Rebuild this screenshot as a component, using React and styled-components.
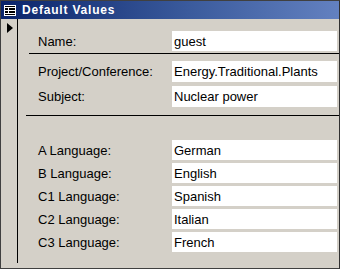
import React from "react";
import styled, { createGlobalStyle } from "styled-components";

const Global = createGlobalStyle`
  html, body {
    margin: 0;
    padding: 0;
    background: #d4d0c8;
  }
`;

const Window = styled.div`
  width: 340px;
  height: 269px;
  box-sizing: border-box;
  border: 1px solid #404040;
  border-right-color: #303030;
  display: flex;
  flex-direction: column;
  background: #d4d0c8;
  font-family: "Liberation Sans", Arial, sans-serif;
  overflow: hidden;
`;

const TitleBar = styled.div`
  height: 18px;
  flex: none;
  display: flex;
  align-items: center;
  gap: 6px;
  padding-left: 3px;
  background: linear-gradient(to right, #0a246a 0%, #3a5a9c 55%, #6381c0 100%);
  color: #fff;
  font-weight: bold;
  font-size: 12px;
  letter-spacing: 0.8px;
`;

const Body = styled.div`
  flex: 1;
  display: flex;
`;

const Selector = styled.div`
  width: 16px;
  flex: none;
  border-right: 1px solid #000;
  margin-bottom: 5px;
  padding-top: 4px;
  display: flex;
  justify-content: center;
`;

const Arrow = styled.div`
  width: 0;
  height: 0;
  margin-left: 1px;
  border-top: 5px solid transparent;
  border-bottom: 5px solid transparent;
  border-left: 6px solid #000;
`;

const Form = styled.div`
  flex: 1;
  padding-top: 12px;
  display: flex;
  flex-direction: column;
`;

const Section = styled.div`
  display: flex;
  flex-direction: column;
  gap: ${(p) => p.$gap}px;
  margin-top: ${(p) => p.$top}px;
`;

const Row = styled.div`
  display: flex;
  align-items: center;
  height: ${(p) => p.$h || 20}px;
  padding-left: 20px;
  font-size: 13px;
`;

const Label = styled.div`
  width: 134px;
  color: #000;
`;

const Field = styled.div`
  flex: 1;
  height: 100%;
  background: #fff;
  display: flex;
  align-items: center;
  padding-left: 2px;
  margin-right: 2px;
  color: #000;
`;

const Rule = styled.div`
  height: 1px;
  background: #000;
  margin: ${(p) => p.$m};
`;

const FormIcon = () => (
  <svg width="12" height="11" viewBox="0 0 12 11">
    <rect x="0" y="0" width="12" height="11" fill="#fff" />
    <rect x="1" y="1" width="10" height="1" fill="#000" />
    <rect x="1" y="3" width="3" height="2" fill="#000" />
    <rect x="5" y="3" width="6" height="2" fill="#000" />
    <rect x="1" y="6" width="3" height="2" fill="#000" />
    <rect x="5" y="6" width="6" height="2" fill="#000" />
    <rect x="1" y="9" width="10" height="1" fill="#000" />
  </svg>
);

const Entry = ({ label, value, h }) => (
  <Row $h={h}>
    <Label>{label}</Label>
    <Field>{value}</Field>
  </Row>
);

const languages = [
  ["A Language:", "German"],
  ["B Language:", "English"],
  ["C1 Language:", "Spanish"],
  ["C2 Language:", "Italian"],
  ["C3 Language:", "French"],
];

export default function App() {
  return (
    <>
      <Global />
      <Window>
        <TitleBar>
          <FormIcon />
          Default Values
        </TitleBar>
        <Body>
          <Selector>
            <Arrow />
          </Selector>
          <Form>
            <Entry label="Name:" value="guest" />
            <Rule $m="2px 0 0 11px" />
            <Section $gap={4} $top={7}>
              <Entry label="Project/Conference:" value="Energy.Traditional.Plants" h={21} />
              <Entry label="Subject:" value="Nuclear power" h={21} />
            </Section>
            <Rule $m="8px 0 0 8px" />
            <Section $gap={3} $top={24}>
              {languages.map(([l, v]) => (
                <Entry key={l} label={l} value={v} />
              ))}
            </Section>
          </Form>
        </Body>
      </Window>
    </>
  );
}
